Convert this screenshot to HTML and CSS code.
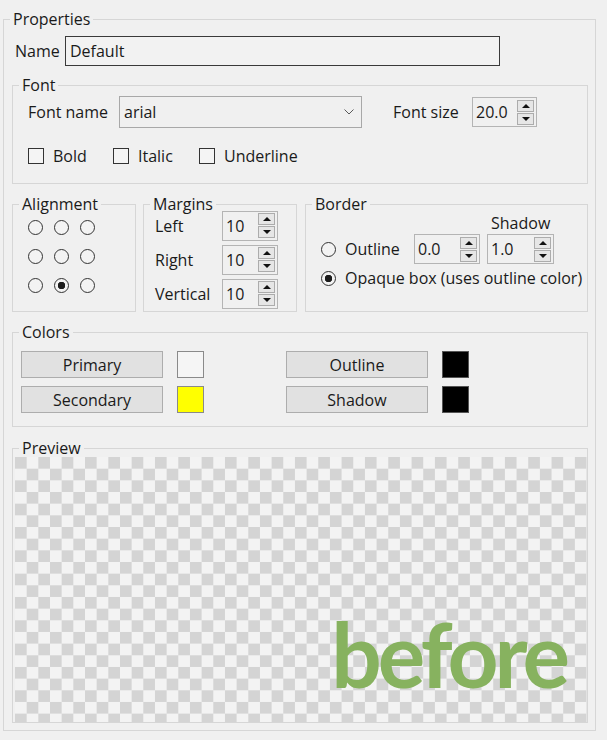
FILE: index.html
```html
<!DOCTYPE html>
<html lang="en">
<head>
    <meta charset="UTF-8">
    <meta name="viewport" content="width=device-width, initial-scale=1.0">
    <title>Style Properties</title>
    <link rel="stylesheet" href="styles.css">
</head>
<body>
<fieldset class="group props">
    <legend>Properties</legend>
    <div class="props-body">
        <div class="name-row">
            <label for="styleName" class="name-lbl">Name</label>
            <input type="text" id="styleName" class="name-input" value="Default">
        </div>

        <fieldset class="group font-group">
            <legend>Font</legend>
            <div class="font-body">
                <div class="font-row">
                    <span class="font-name-lbl">Font name</span>
                    <div class="combo">
                        <span>arial</span>
                        <svg width="10" height="6" viewBox="0 0 10 6"><polyline points="0.5,0.5 5,5 9.5,0.5" fill="none" stroke="#5a5a5a" stroke-width="1"/></svg>
                    </div>
                    <span class="font-size-lbl">Font size</span>
                    <div class="spin spin-size">
                        <input type="text" value="20.0">
                        <div class="spin-btns"><button type="button" class="up"></button><button type="button" class="down"></button></div>
                    </div>
                </div>
                <div class="checks">
                    <label class="check check-bold"><input type="checkbox"> Bold</label>
                    <label class="check check-italic"><input type="checkbox"> Italic</label>
                    <label class="check"><input type="checkbox"> Underline</label>
                </div>
            </div>
        </fieldset>

        <div class="mid-row">
            <fieldset class="group align-group">
                <legend>Alignment</legend>
                <div class="align-grid">
                    <input type="radio" name="align" value="7">
                    <input type="radio" name="align" value="8">
                    <input type="radio" name="align" value="9">
                    <input type="radio" name="align" value="4">
                    <input type="radio" name="align" value="5">
                    <input type="radio" name="align" value="6">
                    <input type="radio" name="align" value="1">
                    <input type="radio" name="align" value="2" checked>
                    <input type="radio" name="align" value="3">
                </div>
            </fieldset>

            <fieldset class="group margins-group">
                <legend>Margins</legend>
                <div class="margins-grid">
                    <span>Left</span>
                    <div class="spin"><input type="text" value="10"><div class="spin-btns"><button type="button" class="up"></button><button type="button" class="down"></button></div></div>
                    <span>Right</span>
                    <div class="spin"><input type="text" value="10"><div class="spin-btns"><button type="button" class="up"></button><button type="button" class="down"></button></div></div>
                    <span>Vertical</span>
                    <div class="spin"><input type="text" value="10"><div class="spin-btns"><button type="button" class="up"></button><button type="button" class="down"></button></div></div>
                </div>
            </fieldset>

            <fieldset class="group border-group">
                <legend>Border</legend>
                <div class="border-body">
                    <div class="shadow-lbl">Shadow</div>
                    <div class="outline-row">
                        <label class="opt outline-opt"><input type="radio" name="borderStyle"> Outline</label>
                        <div class="spin spin-outline"><input type="text" value="0.0"><div class="spin-btns"><button type="button" class="up"></button><button type="button" class="down"></button></div></div>
                        <div class="spin spin-shadow"><input type="text" value="1.0"><div class="spin-btns"><button type="button" class="up"></button><button type="button" class="down"></button></div></div>
                    </div>
                    <label class="opt opaque-opt"><input type="radio" name="borderStyle" checked> Opaque box (uses outline color)</label>
                </div>
            </fieldset>
        </div>

        <fieldset class="group colors-group">
            <legend>Colors</legend>
            <div class="colors-grid">
                <div class="color-cell"><button type="button" class="color-btn">Primary</button><span class="swatch swatch-primary"></span></div>
                <div class="color-cell"><button type="button" class="color-btn">Outline</button><span class="swatch swatch-dark"></span></div>
                <div class="color-cell"><button type="button" class="color-btn">Secondary</button><span class="swatch swatch-secondary"></span></div>
                <div class="color-cell"><button type="button" class="color-btn">Shadow</button><span class="swatch swatch-dark"></span></div>
            </div>
        </fieldset>

        <fieldset class="group preview-group">
            <legend>Preview</legend>
            <div class="checker">
                <span class="sample">before</span>
            </div>
        </fieldset>
    </div>
</fieldset>
</body>
</html>
```

FILE: styles.css
```css
* {
    box-sizing: border-box;
}
body {
    margin: 0;
    background: #f0f0f0;
    font-family: "Open Sans", "Liberation Sans", sans-serif;
    font-size: 16px;
    line-height: 20px;
    color: #1a1a1a;
}
input, button {
    font: inherit;
    color: inherit;
}

/* group boxes */
.group {
    margin: 0;
    padding: 0;
    border: 1px solid #d6d6d6;
    min-width: 0;
}
.group > legend {
    margin-left: 6px;
    padding: 0 3px;
    line-height: 18px;
}
.props {
    margin: 10px 11px 0 3px;
}
.props-body {
    padding: 8px 7px 7px 8px;
}

/* name */
.name-row {
    display: flex;
    align-items: center;
    margin-left: 3px;
}
.name-lbl {
    width: 50px;
}
.name-input {
    width: 435px;
    height: 30px;
    border: 1px solid #3a3a3a;
    background: #f2f2f2;
    padding: 0 4px;
    outline: none;
}

/* font */
.font-group {
    margin-top: 10px;
}
.font-body {
    padding: 2px 0 17px 15px;
}
.font-row {
    display: flex;
    align-items: center;
}
.font-name-lbl {
    width: 91px;
}
.combo {
    width: 243px;
    height: 32px;
    border: 1px solid #a8a8a8;
    display: flex;
    align-items: center;
    justify-content: space-between;
    padding: 0 7px 0 4px;
}
.font-size-lbl {
    margin-left: 31px;
    width: 79px;
}
.checks {
    display: flex;
    align-items: center;
    margin-top: 18px;
}
.check {
    display: flex;
    align-items: center;
    gap: 9px;
}
.check-bold {
    width: 85px;
}
.check-italic {
    width: 86px;
}
.check input {
    appearance: none;
    margin: 0;
    width: 16px;
    height: 16px;
    border: 1px solid #333;
    background: #f4f4f4;
}

/* spin boxes */
.spin {
    display: flex;
    align-items: center;
    height: 30px;
    border: 1px solid #b4b4b4;
    padding: 0 2px 0 3px;
}
.spin input {
    flex: 1;
    width: 0;
    border: none;
    background: transparent;
    padding: 0;
    outline: none;
}
.spin-btns {
    display: flex;
    flex-direction: column;
    gap: 1px;
}
.spin-btns button {
    width: 17px;
    height: 12px;
    padding: 0;
    border: 1px solid #acacac;
    background: #e6e6e6;
    display: flex;
    align-items: center;
    justify-content: center;
}
.spin-btns .up::before,
.spin-btns .down::before {
    content: "";
    border-left: 4px solid transparent;
    border-right: 4px solid transparent;
}
.spin-btns .up::before {
    border-bottom: 4px solid #111;
}
.spin-btns .down::before {
    border-top: 4px solid #111;
}
.spin-size {
    width: 65px;
}

/* alignment / margins / border */
.mid-row {
    display: flex;
    margin-top: 11px;
}
.align-group {
    width: 124px;
}
.margins-group {
    width: 154px;
    margin-left: 7px;
}
.border-group {
    flex: 1;
    margin-left: 8px;
}
input[type="radio"] {
    appearance: none;
    margin: 0;
    width: 15px;
    height: 15px;
    border: 1px solid #333;
    border-radius: 50%;
    background: #f3f3f3;
}
input[type="radio"]:checked {
    background: radial-gradient(circle, #1c1c1c 0 3.5px, #f3f3f3 4px);
}
.align-grid {
    display: grid;
    grid-template-columns: repeat(3, 26px);
    grid-auto-rows: 29px;
    place-items: center;
    padding-left: 9px;
}
.margins-grid {
    display: grid;
    grid-template-columns: 67px 56px;
    grid-auto-rows: 29px;
    row-gap: 5px;
    align-items: center;
    margin-top: -2px;
    padding: 0 0 3px 11px;
}
.border-body {
    padding-left: 15px;
}
.shadow-lbl {
    padding-left: 170px;
}
.outline-row {
    display: flex;
    align-items: center;
    margin-top: 1px;
}
.opt {
    display: flex;
    align-items: center;
    gap: 9px;
}
.outline-opt {
    width: 93px;
}
.spin-outline {
    width: 66px;
}
.spin-shadow {
    width: 67px;
    margin-left: 7px;
}
.opaque-opt {
    margin-top: 4px;
}

/* colors */
.colors-group {
    margin-top: 11px;
}
.colors-grid {
    display: grid;
    grid-template-columns: 265px 265px;
    row-gap: 8px;
    padding: 10px 0 13px 8px;
}
.color-cell {
    display: flex;
    align-items: center;
    gap: 14px;
}
.color-btn {
    width: 142px;
    height: 27px;
    padding: 0;
    border: 1px solid #adadad;
    background: #e1e1e1;
}
.swatch {
    width: 27px;
    height: 27px;
    border: 1px solid #8a8a8a;
}
.swatch-primary {
    background: #f5f5f5;
}
.swatch-secondary {
    background: #ffff00;
}
.swatch-dark {
    background: #000;
    border-color: #555;
}

/* preview */
.preview-group {
    margin-top: 12px;
}
.checker {
    margin-left: 2px;
    height: 265px;
    display: flex;
    justify-content: flex-end;
    align-items: flex-end;
    padding: 0 21px 24px 0;
    background: repeating-conic-gradient(#f3f3f3 0 25%, #d4d4d4 0 50%) 0 0 / 23.33px 23.33px;
}
.sample {
    font-family: Lato, "Open Sans", sans-serif;
    font-weight: 700;
    font-size: 89px;
    line-height: 1;
    letter-spacing: -4px;
    color: #87b25f;
}
```
